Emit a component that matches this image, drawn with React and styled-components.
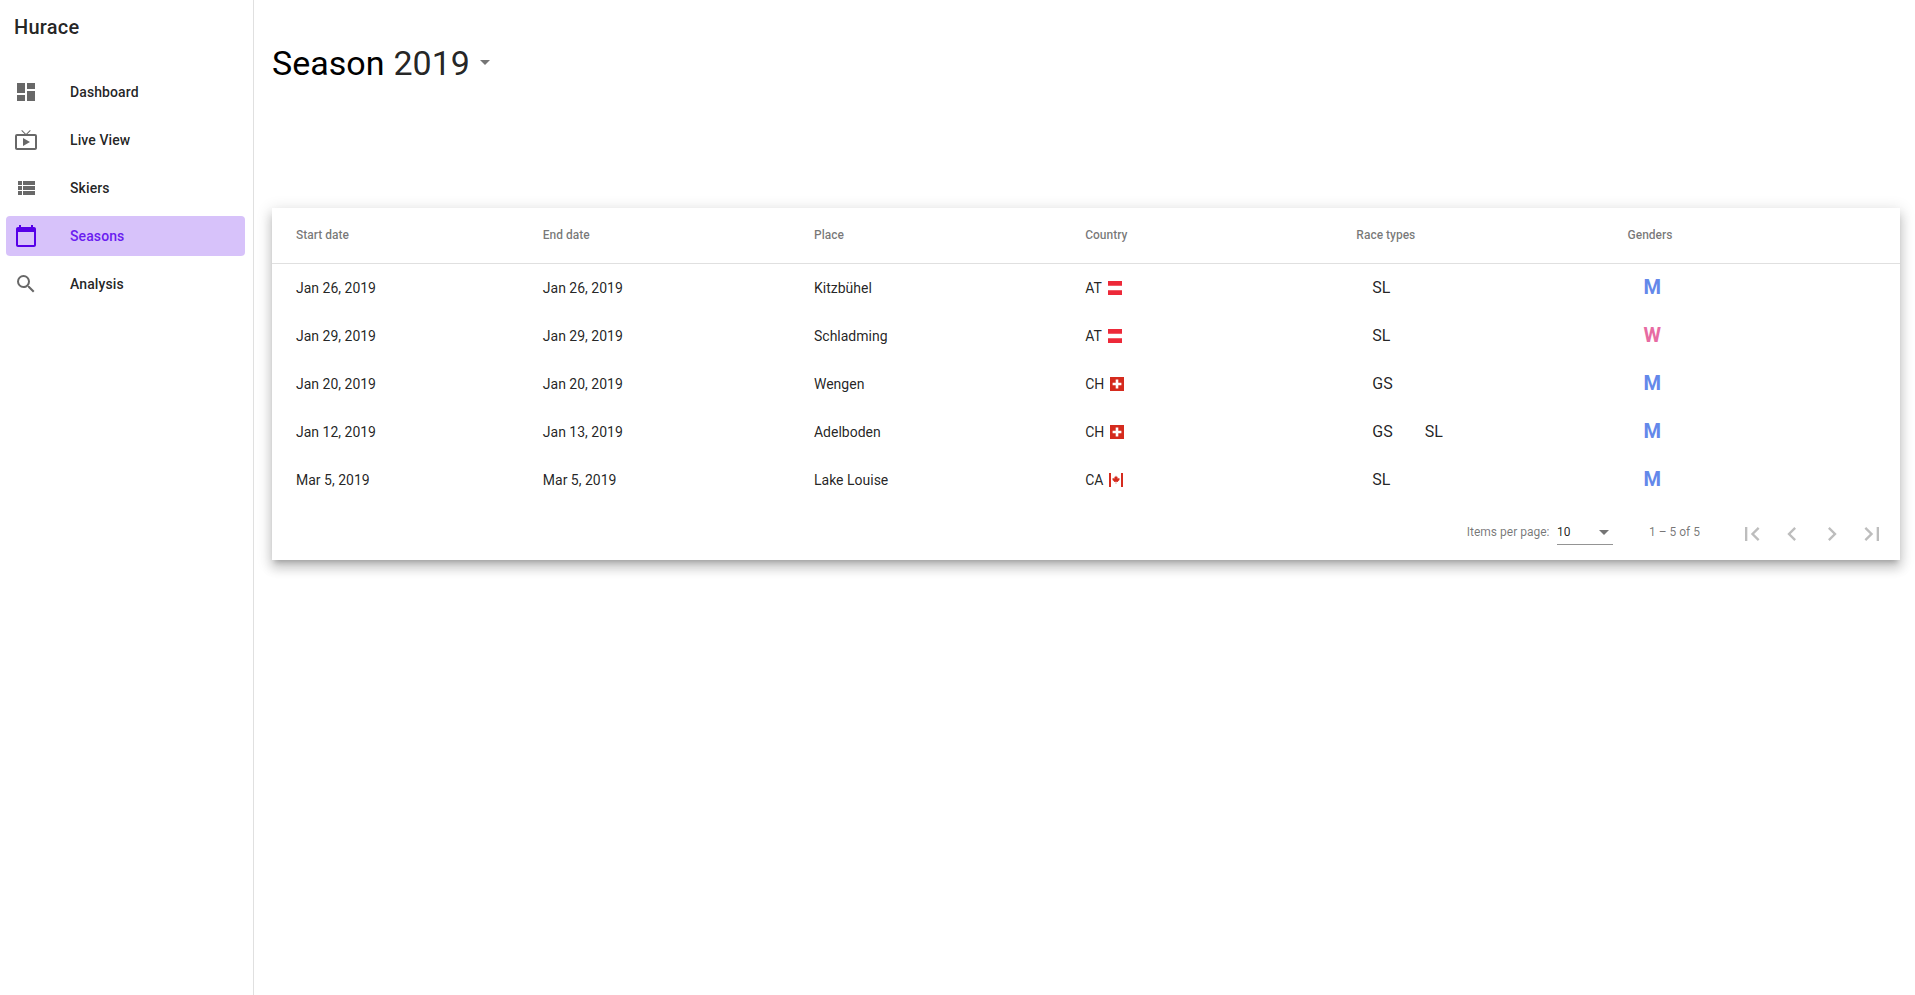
import React from "react";
import styled, { createGlobalStyle } from "styled-components";
import {
  MdDashboard,
  MdLiveTv,
  MdCalendarToday,
  MdSearch,
  MdFirstPage,
  MdChevronLeft,
  MdChevronRight,
  MdLastPage,
} from "react-icons/md";

const GlobalStyle = createGlobalStyle`
  *, *::before, *::after { box-sizing: border-box; }
  body {
    margin: 0;
    background: #fff;
    font-family: Roboto, "Liberation Sans", sans-serif;
    -webkit-font-smoothing: antialiased;
  }
`;

const Layout = styled.div`
  display: flex;
  height: 100vh;
  overflow: hidden;
`;

const Sidebar = styled.aside`
  width: 254px;
  flex: none;
  border-right: 1px solid #e0e0e0;
`;

const Brand = styled.div`
  height: 64px;
  padding: 11px 14px 0;
  font-size: 20px;
  line-height: 32px;
  font-weight: 500;
  letter-spacing: 0.25px;
  color: rgba(0, 0, 0, 0.87);
`;

const NavList = styled.nav`
  display: flex;
  flex-direction: column;
  gap: 8px;
  padding: 8px 8px 0 6px;
`;

const NavItem = styled.a`
  display: flex;
  align-items: center;
  gap: 32px;
  height: 40px;
  padding: 0 8px;
  border-radius: 4px;
  font-size: 14px;
  font-weight: 500;
  letter-spacing: 0.1px;
  color: ${(p) => (p.$active ? "#6a1cf0" : "rgba(0, 0, 0, 0.87)")};
  background: ${(p) => (p.$active ? "#d7c2fa" : "transparent")};

  svg {
    width: 24px;
    height: 24px;
    color: ${(p) => (p.$active ? "#5600e8" : "#686868")};
  }
`;

const Main = styled.main`
  flex: 1;
  min-width: 0;
  padding: 40px 15px 0 18px;
`;

const Title = styled.h1`
  display: flex;
  align-items: center;
  height: 46px;
  margin: 0 0 122px;
  font-size: 34px;
  font-weight: 400;
  color: #000;
`;

const YearSelect = styled.span`
  display: inline-flex;
  align-items: center;
  gap: 10px;
  margin-left: 9px;
  color: rgba(0, 0, 0, 0.87);
`;

const Caret = styled.span`
  margin: ${(p) => (p.$raised ? "0 0 1px" : "1px 0 0")};
  border-left: 5px solid transparent;
  border-right: 5px solid transparent;
  border-top: 5px solid #757575;
`;

const Card = styled.section`
  background: #fff;
  box-shadow: 0 5px 5px -3px rgba(0, 0, 0, 0.2),
    0 8px 10px 1px rgba(0, 0, 0, 0.14), 0 3px 14px 2px rgba(0, 0, 0, 0.12);
`;

const Row = styled.div`
  display: grid;
  grid-template-columns: 246.8px repeat(4, 271.2px) 1fr;
  align-items: center;
  height: 48px;
  padding: 0 24px;
  font-size: 14px;
  color: rgba(0, 0, 0, 0.87);
`;

const HeaderRow = styled(Row)`
  height: 56px;
  padding-bottom: 1px;
  border-bottom: 1px solid #e0e0e0;
  font-size: 12px;
  font-weight: 500;
  color: rgba(0, 0, 0, 0.54);
`;

const CountryCell = styled.div`
  display: flex;
  align-items: center;
  gap: 6px;

  svg {
    width: 14px;
    height: 14px;
  }
`;

const Tags = styled.div`
  display: flex;
  gap: 32px;
  padding: 0 0 1px 16px;
  font-size: 16px;
`;

const Gender = styled.div`
  padding: 0 0 2px 16px;
  font-size: 20px;
  font-weight: 700;
  color: ${(p) => (p.$women ? "#e76ba3" : "#6488ea")};
`;

const Paginator = styled.footer`
  display: flex;
  align-items: center;
  justify-content: flex-end;
  height: 56px;
  padding-right: 8px;
  font-size: 12px;
  color: rgba(0, 0, 0, 0.54);
`;

const PageSize = styled.div`
  display: flex;
  align-items: center;
  justify-content: space-between;
  width: 56px;
  height: 26px;
  margin: 0 36px 0 7.5px;
  padding: 1px 4px 0 0;
  border-bottom: 1px solid #949494;
  color: rgba(0, 0, 0, 0.87);
`;

const Range = styled.span`
  margin-right: 32px;
`;

const PageButton = styled.button`
  display: flex;
  align-items: center;
  justify-content: center;
  width: 40px;
  height: 40px;
  margin-top: 4px;
  padding: 0;
  border: 0;
  background: none;
  color: #bdbdbd;

  svg {
    width: 28px;
    height: 28px;
  }
`;

const ListIcon = () => (
  <svg viewBox="0 0 24 24" fill="currentColor">
    <path d="M4 14h4v-4H4v4zm0 5h4v-4H4v4zM4 9h4V5H4v4zm5 5h12v-4H9v4zm0 5h12v-4H9v4zM9 5v4h12V5H9z" />
  </svg>
);

const flags = {
  AT: (
    <svg viewBox="0 0 14 14">
      <path fill="#ed2939" d="M0 0h14v4.67H0zM0 9.33h14V14H0z" />
    </svg>
  ),
  CH: (
    <svg viewBox="0 0 14 14">
      <path fill="#d52b1e" d="M0 0h14v14H0z" />
      <path fill="#fff" d="M5.7 2.6h2.6v3.1h3.1v2.6H8.3v3.1H5.7V8.3H2.6V5.7h3.1z" />
    </svg>
  ),
  CA: (
    <svg viewBox="0 0 14 14">
      <path fill="#d52b1e" d="M0 0h2v14H0zM12 0h2v14h-2z" />
      <path
        fill="#d52b1e"
        d="M7 2.6l-.8 1.5-.9-.4.4 2-1-.9-.2.6-1.2-.2.4 1.3-.5.3 2 1.6-.2.7 1.8-.3V11h.4V8.8l1.8.3-.2-.7 2-1.6-.5-.3.4-1.3-1.2.2-.2-.6-1 .9.4-2-.9.4z"
      />
    </svg>
  ),
};

const navItems = [
  { label: "Dashboard", Icon: MdDashboard },
  { label: "Live View", Icon: MdLiveTv },
  { label: "Skiers", Icon: ListIcon },
  { label: "Seasons", Icon: MdCalendarToday, active: true },
  { label: "Analysis", Icon: MdSearch },
];

const columns = ["Start date", "End date", "Place", "Country", "Race types", "Genders"];

const events = [
  { start: "Jan 26, 2019", end: "Jan 26, 2019", place: "Kitzbühel", country: "AT", types: ["SL"], gender: "M" },
  { start: "Jan 29, 2019", end: "Jan 29, 2019", place: "Schladming", country: "AT", types: ["SL"], gender: "W" },
  { start: "Jan 20, 2019", end: "Jan 20, 2019", place: "Wengen", country: "CH", types: ["GS"], gender: "M" },
  { start: "Jan 12, 2019", end: "Jan 13, 2019", place: "Adelboden", country: "CH", types: ["GS", "SL"], gender: "M" },
  { start: "Mar 5, 2019", end: "Mar 5, 2019", place: "Lake Louise", country: "CA", types: ["SL"], gender: "M" },
];

const pageIcons = [MdFirstPage, MdChevronLeft, MdChevronRight, MdLastPage];

export default function App() {
  return (
    <Layout>
      <GlobalStyle />
      <Sidebar>
        <Brand>Hurace</Brand>
        <NavList>
          {navItems.map(({ label, Icon, active }) => (
            <NavItem key={label} $active={active}>
              <Icon />
              {label}
            </NavItem>
          ))}
        </NavList>
      </Sidebar>
      <Main>
        <Title>
          Season
          <YearSelect>
            2019
            <Caret $raised />
          </YearSelect>
        </Title>
        <Card>
          <HeaderRow>
            {columns.map((c) => (
              <span key={c}>{c}</span>
            ))}
          </HeaderRow>
          {events.map((e) => (
            <Row key={e.place}>
              <span>{e.start}</span>
              <span>{e.end}</span>
              <span>{e.place}</span>
              <CountryCell>
                {e.country}
                {flags[e.country]}
              </CountryCell>
              <Tags>
                {e.types.map((t) => (
                  <span key={t}>{t}</span>
                ))}
              </Tags>
              <Gender $women={e.gender === "W"}>{e.gender}</Gender>
            </Row>
          ))}
          <Paginator>
            Items per page:
            <PageSize>
              10
              <Caret />
            </PageSize>
            <Range>1 – 5 of 5</Range>
            {pageIcons.map((Icon, i) => (
              <PageButton key={i} disabled>
                <Icon />
              </PageButton>
            ))}
          </Paginator>
        </Card>
      </Main>
    </Layout>
  );
}
